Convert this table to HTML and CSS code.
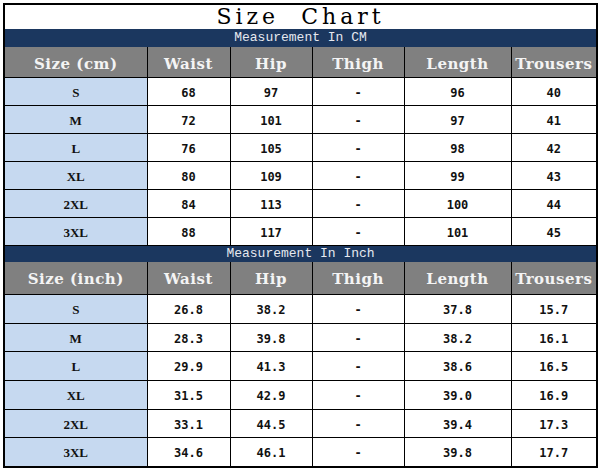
FILE: index.html
```html
<!DOCTYPE html>
<html lang="en">
<head>
<meta charset="utf-8">
<title>Size Chart</title>
<link rel="stylesheet" href="styles.css">
</head>
<body>
<table class="chart">
  <colgroup>
    <col class="c-size"><col class="c-waist"><col class="c-hip"><col class="c-thigh"><col class="c-length"><col class="c-trousers">
  </colgroup>
  <tbody>
    <tr class="title-row"><td colspan="6" class="title">Size&nbsp;&nbsp;Chart</td></tr>
    <tr class="band-row band-cm"><td colspan="6" class="band">Measurement In CM</td></tr>
    <tr class="head-row head-cm"><th>Size (cm)</th><th>Waist</th><th>Hip</th><th>Thigh</th><th>Length</th><th>Trousers</th></tr>
    <tr class="data-row cm"><td class="size">S</td><td>68</td><td>97</td><td>-</td><td>96</td><td>40</td></tr>
    <tr class="data-row cm"><td class="size">M</td><td>72</td><td>101</td><td>-</td><td>97</td><td>41</td></tr>
    <tr class="data-row cm"><td class="size">L</td><td>76</td><td>105</td><td>-</td><td>98</td><td>42</td></tr>
    <tr class="data-row cm"><td class="size">XL</td><td>80</td><td>109</td><td>-</td><td>99</td><td>43</td></tr>
    <tr class="data-row cm"><td class="size">2XL</td><td>84</td><td>113</td><td>-</td><td>100</td><td>44</td></tr>
    <tr class="data-row cm"><td class="size">3XL</td><td>88</td><td>117</td><td>-</td><td>101</td><td>45</td></tr>
    <tr class="band-row band-inch"><td colspan="6" class="band">Measurement In Inch</td></tr>
    <tr class="head-row head-inch"><th>Size (inch)</th><th>Waist</th><th>Hip</th><th>Thigh</th><th>Length</th><th>Trousers</th></tr>
    <tr class="data-row inch"><td class="size">S</td><td>26.8</td><td>38.2</td><td>-</td><td>37.8</td><td>15.7</td></tr>
    <tr class="data-row inch"><td class="size">M</td><td>28.3</td><td>39.8</td><td>-</td><td>38.2</td><td>16.1</td></tr>
    <tr class="data-row inch"><td class="size">L</td><td>29.9</td><td>41.3</td><td>-</td><td>38.6</td><td>16.5</td></tr>
    <tr class="data-row inch"><td class="size">XL</td><td>31.5</td><td>42.9</td><td>-</td><td>39.0</td><td>16.9</td></tr>
    <tr class="data-row inch"><td class="size">2XL</td><td>33.1</td><td>44.5</td><td>-</td><td>39.4</td><td>17.3</td></tr>
    <tr class="data-row inch"><td class="size">3XL</td><td>34.6</td><td>46.1</td><td>-</td><td>39.8</td><td>17.7</td></tr>
  </tbody>
</table>
</body>
</html>
```
FILE: styles.css
```css
html, body {
  margin: 0;
  padding: 0;
  background: #ffffff;
}

body {
  padding: 3px 0 0 3px;
}

.chart {
  border-collapse: collapse;
  table-layout: fixed;
  width: 593px;
  border: 2px solid #000;
  font-family: "Liberation Mono", "DejaVu Sans Mono", monospace;
}

.c-size { width: 143px; }
.c-waist { width: 83px; }
.c-hip { width: 82px; }
.c-thigh { width: 92px; }
.c-length { width: 107px; }
.c-trousers { width: 86px; }

.chart td,
.chart th {
  padding: 0;
  text-align: center;
  vertical-align: middle;
}

.title {
  height: 24px;
  font-family: "DejaVu Serif", "Liberation Serif", serif;
  font-size: 22px;
  letter-spacing: 4px;
  line-height: 24px;
  color: #000;
  background: #fff;
  padding-left: 4px;
}

.band {
  background: #1b375f;
  color: #e6e9f0;
  font-size: 13px;
  vertical-align: bottom;
  line-height: 14px;
}

.band-cm .band { height: 18px; }
.band-inch .band { height: 16px; }

.head-row th {
  background: #808080;
  color: #f4f4f4;
  font-family: "DejaVu Serif", "Liberation Serif", serif;
  font-weight: bold;
  font-size: 15px;
  letter-spacing: 0.5px;
  border-left: 1px solid #000;
  border-right: 1px solid #000;
  border-bottom: 1px solid #000;
}

.head-cm th { height: 27px; padding-top: 3px; }
.head-inch th { height: 30px; padding-top: 2px; }

.data-row td {
  border: 1px solid #000;
  font-family: "DejaVu Sans Mono", "Liberation Mono", monospace;
  font-weight: bold;
  font-size: 12px;
  color: #111;
  background: #fff;
}

.data-row.cm td { height: 25px; padding-top: 2px; }
.data-row.inch td { height: 25.7px; padding-top: 2px; }

.data-row td.size {
  background: #c6d9f0;
  font-family: "Liberation Serif", "DejaVu Serif", serif;
  font-size: 13px;
}
```
